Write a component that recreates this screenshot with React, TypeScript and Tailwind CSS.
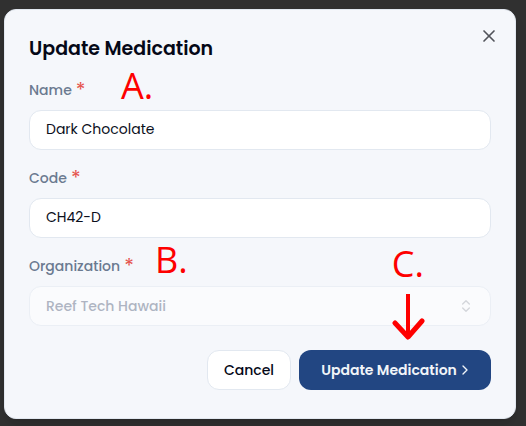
import type { ReactNode } from "react";
import { ChevronRight, ChevronsUpDown, X } from "lucide-react";

function Field({ id, label, children }: { id: string; label: string; children: ReactNode }) {
  return (
    <div className="flex flex-col gap-2">
      <label htmlFor={id} className="flex h-6 items-center gap-1 text-sm font-medium text-[#6b7a90]">
        {label}
        <span className="text-xl leading-6 font-normal text-[#e5534d]">*</span>
      </label>
      {children}
    </div>
  );
}

const fieldBox =
  "h-10 w-full rounded-xl border border-[#e2e8f0] bg-white px-4 text-sm text-[#0b0f1c] outline-none";

function Annotation({ className, children }: { className: string; children: ReactNode }) {
  return (
    <span
      className={`pointer-events-none absolute font-['Open_Sans','Noto_Sans',sans-serif] text-4xl leading-10 text-[#fe0000] ${className}`}
    >
      {children}
    </span>
  );
}

export default function App() {
  return (
    <div className="min-h-screen bg-[#303030] pt-[9px] pr-2.5 pb-[7px] pl-1 font-[Poppins,Inter,sans-serif]">
      <div
        role="dialog"
        aria-labelledby="dialog-title"
        className="relative rounded-xl border border-[#e2e8f0] bg-[#f5f7fb] px-6 pt-6 pb-7 shadow-lg"
      >
        <button type="button" aria-label="Close" className="absolute top-4 right-4 text-[#51535a]">
          <X className="size-5" strokeWidth={2} />
        </button>

        <h2 id="dialog-title" className="text-[19px] leading-[30px] font-semibold text-[#050817]">
          Update Medication
        </h2>

        <form className="mt-3.5 flex flex-col gap-4">
          <Field id="name" label="Name">
            <input id="name" type="text" defaultValue="Dark Chocolate" className={`${fieldBox} pb-0.5`} />
          </Field>
          <Field id="code" label="Code">
            <input id="code" type="text" defaultValue="CH42-D" className={`${fieldBox} pb-0.5`} />
          </Field>
          <Field id="organization" label="Organization">
            <div className="relative opacity-50">
              <select id="organization" disabled className={`${fieldBox} appearance-none font-medium text-[#69738a]`}>
                <option>Reef Tech Hawaii</option>
              </select>
              <ChevronsUpDown className="pointer-events-none absolute top-3 right-[17px] size-4 text-[#b3b6bc]" />
            </div>
          </Field>

          <div className="mt-2 flex justify-end gap-2">
            <button
              type="button"
              className="h-10 w-[84px] rounded-xl border border-[#e2e8f0] bg-white text-sm font-medium text-[#050817]"
            >
              Cancel
            </button>
            <button
              type="button"
              className="flex h-10 w-48 items-center justify-center rounded-xl bg-[#224682] pl-1 text-sm font-semibold text-[#f1f5f9]"
            >
              Update Medication
              <ChevronRight className="size-4" />
            </button>
          </div>
        </form>

        <Annotation className="top-14 left-[116px]">A.</Annotation>
        <Annotation className="top-[230px] left-[150px]">B.</Annotation>
        <Annotation className="top-[234px] right-[91px]">C.</Annotation>
        <svg
          aria-hidden="true"
          viewBox="0 0 34 48"
          className="pointer-events-none absolute top-[283px] right-[90px] h-12 w-[34px]"
          fill="none"
          stroke="#fe0000"
        >
          <path d="M17 1v42" strokeWidth="4" />
          <path d="M4 30L17 44L31 28" strokeWidth="5" strokeLinecap="round" strokeLinejoin="round" />
        </svg>
      </div>
    </div>
  );
}
